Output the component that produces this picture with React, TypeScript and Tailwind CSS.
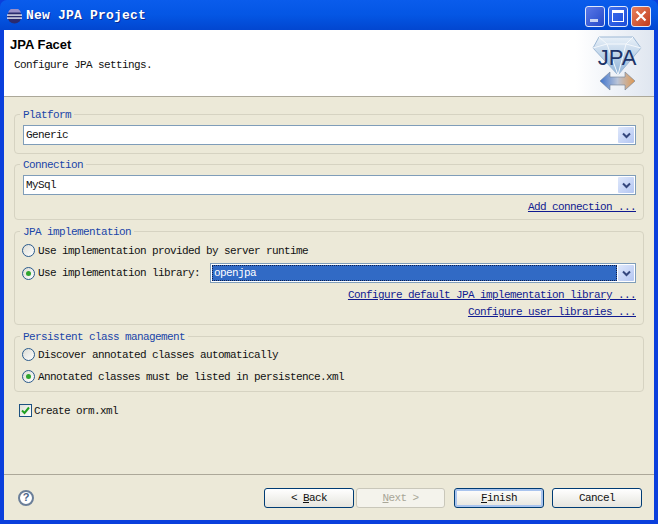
import type { ReactNode } from "react";

const MONO = "font-['Liberation_Mono',monospace] text-[11px] leading-[12px] tracking-[-0.6px] text-[#111]";

function Group({ title, children, className }: { title: string; children: ReactNode; className: string }) {
  return (
    <fieldset className={`rounded-[4px] border border-[#d6d3c2] pl-[8px] pr-[7px] ${className}`}>
      <legend className={`${MONO} -ml-[3px] px-[3px] pt-[1px] !text-[#1a45a8]`}>{title}</legend>
      {children}
    </fieldset>
  );
}

function Combo({ value, selected, className }: { value: string; selected?: boolean; className?: string }) {
  return (
    <div className={`flex h-[20px] items-center border border-[#7f9db9] bg-white pl-[1px] pr-[1px] ${className ?? ""}`}>
      <span className={`${MONO} flex h-[16px] flex-1 items-center pl-[1px] ${selected ? "border border-dotted border-[#10204a] bg-[#316ac5] !text-white" : ""}`}>
        {value}
      </span>
      <span className="ml-[1px] flex h-[16px] w-[16px] items-center justify-center rounded-[1px] bg-gradient-to-br from-[#dfe8fb] to-[#b4c6f2]">
        <svg width="9" height="7" viewBox="0 0 9 7">
          <path d="M1 1.5 L4.5 5 L8 1.5" fill="none" stroke="#35477d" strokeWidth="2" />
        </svg>
      </span>
    </div>
  );
}

function Radio({ label, checked }: { label: string; checked?: boolean }) {
  return (
    <div className="-ml-[1px] flex items-center gap-[3px]">
      <span className="flex h-[13px] w-[13px] items-center justify-center rounded-full border border-[#2a5a8c] bg-gradient-to-br from-[#dcdcd4] to-white">
        {checked && <span className="h-[5px] w-[5px] rounded-full bg-[#2fa52f]" />}
      </span>
      <span className={MONO}>{label}</span>
    </div>
  );
}

function LinkText({ children, className }: { children: ReactNode; className?: string }) {
  return <div className={`${MONO} text-right !text-[#101a90] underline underline-offset-1 ${className ?? ""}`}>{children}</div>;
}

function WinButton({ children, className, first, disabled }: { children: ReactNode; className?: string; first?: boolean; disabled?: boolean }) {
  return (
    <button
      className={`h-[20px] rounded-[3px] border ${MONO} ${
        disabled
          ? "border-[#c9c7ba] bg-[#f4f3ec] !text-[#a8a697]"
          : "border-[#003c74] bg-gradient-to-b from-white to-[#e6e5de]"
      } ${first ? "shadow-[inset_0_0_0_2px_#a9c4ee]" : ""} ${className ?? ""}`}
    >
      {children}
    </button>
  );
}

function CaptionButton({ children, className }: { children: ReactNode; className: string }) {
  return <div className={`flex h-[21px] w-[20px] items-center justify-center rounded-[3px] border border-[#dfe8fb] ${className}`}>{children}</div>;
}

function JpaLogo() {
  return (
    <svg width="50" height="56" viewBox="0 0 50 56">
      <defs>
        <linearGradient id="gem" x1="0" y1="0" x2="0" y2="1">
          <stop offset="0" stopColor="#e8f0f8" />
          <stop offset="1" stopColor="#8fb3d8" />
        </linearGradient>
        <linearGradient id="arrow" x1="0" y1="0" x2="1" y2="0">
          <stop offset="0" stopColor="#3f74cc" />
          <stop offset="0.5" stopColor="#b9c4d8" />
          <stop offset="1" stopColor="#e0984f" />
        </linearGradient>
      </defs>
      <path d="M7 1 H41 L49 12 L26 39 L1 12 Z" fill="url(#gem)" stroke="#9db8d4" />
      <path d="M7 1 L15 8 H34 L41 1 M1 12 L15 8 M34 8 L49 12 M15 8 L26 39 L34 8" fill="none" stroke="#f4f8fc" />
      <text x="25" y="29" textAnchor="middle" fontFamily="Liberation Sans, sans-serif" fontSize="22" fill="#1d3468">JPA</text>
      <path d="M8 45 L18 36 V41 H33 V36 L43 45 L33 54 V49 H18 V54 Z" fill="url(#arrow)" stroke="#6f7f95" strokeWidth="0.6" />
    </svg>
  );
}

export default function App() {
  return (
    <div className="flex h-[524px] w-[658px] flex-col overflow-hidden bg-[#0a3fdc]">
      {/* title bar */}
      <div className="flex h-[30px] shrink-0 items-center rounded-t-[7px] bg-gradient-to-b from-[#0a5cec] via-[#0456e4] to-[#0246d0] pl-[7px] pr-[7px] pt-[2px]">
        <svg width="15" height="15" viewBox="0 0 15 15" className="mr-[4px]">
          <circle cx="7.5" cy="7.5" r="7" fill="#2b2a6e" />
          <rect x="0" y="5.4" width="15" height="1.4" fill="#e8e8f4" />
          <rect x="0" y="8.4" width="15" height="1.4" fill="#e8e8f4" />
          <path d="M1 3.5 A7 7 0 0 1 14 3.5 Z" fill="#9a8fc8" />
        </svg>
        <span className="flex-1 font-['Liberation_Mono',monospace] text-[13px] font-bold leading-[14px] tracking-[0.2px] text-white [text-shadow:1px_1px_0_#0a2a90]">
          New JPA Project
        </span>
        <div className="flex gap-[3px]">
          <CaptionButton className="bg-gradient-to-br from-[#5a78e8] to-[#2448c8]">
            <span className="mt-[8px] mr-[3px] h-[3px] w-[8px] bg-[#c8d4f4]" />
          </CaptionButton>
          <CaptionButton className="bg-gradient-to-br from-[#3f70ee] to-[#1c4cd8]">
            <span className="h-[12px] w-[12px] border border-t-[3px] border-white" />
          </CaptionButton>
          <CaptionButton className="bg-gradient-to-br from-[#e8805c] to-[#c03a1a]">
            <svg width="12" height="12" viewBox="0 0 12 12">
              <path d="M1.5 1.5 L10.5 10.5 M10.5 1.5 L1.5 10.5" stroke="white" strokeWidth="2.2" />
            </svg>
          </CaptionButton>
        </div>
      </div>

      <div className="mx-[4px] mb-[4px] flex min-h-0 flex-1 flex-col bg-[#ece9d8]">
        {/* header */}
        <div className="flex h-[67px] shrink-0 justify-between border-b border-[#aca899] bg-white bg-[linear-gradient(to_right,#ffffff_88%,#dfe6f0_100%)]">
          <div className="pl-[6px] pt-[8px]">
            <div className="font-['Liberation_Sans',sans-serif] text-[13px] font-bold leading-[14px] text-black">JPA Facet</div>
            <div className={`${MONO} ml-[4px] mt-[7px]`}>Configure JPA settings.</div>
          </div>
          <div className="mr-[12px] mt-[6px]">
            <JpaLogo />
          </div>
        </div>

        {/* form */}
        <div className="flex flex-1 flex-col px-[10px] pt-[11px]">
          <Group title="Platform" className="mb-[4px] h-[46px]">
            <Combo value="Generic" className="mt-[4px]" />
          </Group>
          <Group title="Connection" className="mb-[5px] h-[62px]">
            <Combo value="MySql" className="mt-[4px]" />
            <LinkText className="mt-[6px]">Add connection ...</LinkText>
          </Group>
          <Group title="JPA implementation" className="mb-[5px] h-[100px]">
            <div className="mt-[6px]">
              <Radio label="Use implementation provided by server runtime" />
            </div>
            <div className="mt-[6px] flex items-center">
              <div className="w-[187px]">
                <Radio label="Use implementation library:" checked />
              </div>
              <Combo value="openjpa" selected className="flex-1" />
            </div>
            <LinkText className="mt-[6px]">Configure default JPA implementation library ...</LinkText>
            <LinkText className="mt-[5px]">Configure user libraries ...</LinkText>
          </Group>
          <Group title="Persistent class management" className="mb-[5px] h-[62px]">
            <div className="mt-[5px]">
              <Radio label="Discover annotated classes automatically" />
            </div>
            <div className="mt-[9px]">
              <Radio label="Annotated classes must be listed in persistence.xml" checked />
            </div>
          </Group>
          <div className="ml-[5px] mt-[7px] flex items-center gap-[2px]">
            <span className="flex h-[13px] w-[13px] items-center justify-center border border-[#1c5180] bg-gradient-to-br from-[#e0e0d8] to-white">
              <svg width="9" height="9" viewBox="0 0 9 9">
                <path d="M1 4.5 L3.5 7 L8 1.5" fill="none" stroke="#21a121" strokeWidth="2" />
              </svg>
            </span>
            <span className={MONO}>Create orm.xml</span>
          </div>
        </div>

        {/* footer */}
        <div className="flex h-[46px] shrink-0 items-center border-t border-[#aca899] pl-[14px] pr-[12px]">
          <span className="flex h-[16px] w-[16px] items-center justify-center rounded-full border-2 border-[#6b7f99] bg-white font-['Liberation_Sans',sans-serif] text-[11px] font-bold leading-none text-[#4a6488]">
            ?
          </span>
          <div className="ml-auto flex">
            <WinButton className="w-[90px]">
              &lt;  <span className="underline">B</span>ack
            </WinButton>
            <WinButton disabled className="ml-[2px] w-[89px]">
              <span className="underline">N</span>ext &gt;
            </WinButton>
            <WinButton first className="ml-[9px] w-[90px]">
              <span className="underline">F</span>inish
            </WinButton>
            <WinButton className="ml-[8px] w-[90px]">Cancel</WinButton>
          </div>
        </div>
      </div>
    </div>
  );
}
